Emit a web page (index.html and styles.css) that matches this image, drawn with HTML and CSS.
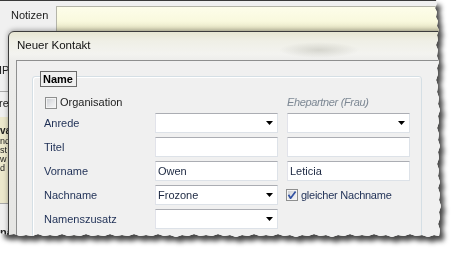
FILE: index.html
```html
<!DOCTYPE html>
<html>
<head>
<meta charset="utf-8">
<link rel="stylesheet" href="styles.css">
</head>
<body>
<div class="paper">
  <div class="sheet">
    <div class="bgwin">
      <div class="notes">
        <span class="notes-label">Notizen</span>
        <div class="notes-area"></div>
      </div>
      <div class="strip">
        <div class="s-ip">IP</div>
        <div class="s-line1"></div>
        <div class="s-re">re</div>
        <div class="s-panel">
          <div class="s-b">va</div>
          <div>nd</div>
          <div>st</div>
          <div>w</div>
          <div>d H</div>
        </div>
        <div class="s-line2"></div>
        <div class="s-na">nä</div>
      </div>
    </div>

    <div class="dialog">
      <div class="titlebar">Neuer Kontakt</div>
      <div class="client">
        <div class="group">
          <div class="legend">Name</div>
          <div class="form">
            <div class="check span2">
              <span class="cb"></span>
              <span class="cb-label dark">Organisation</span>
            </div>
            <div class="partner">Ehepartner (Frau)</div>

            <div class="label">Anrede</div>
            <div class="field combo"><span class="val"></span><svg class="arrow" width="7" height="4" viewBox="0 0 7 4"><polygon points="0,0 7,0 3.5,4" fill="#000"/></svg></div>
            <div class="field combo"><span class="val"></span><svg class="arrow" width="7" height="4" viewBox="0 0 7 4"><polygon points="0,0 7,0 3.5,4" fill="#000"/></svg></div>

            <div class="label">Titel</div>
            <div class="field"><span class="val"></span></div>
            <div class="field"><span class="val"></span></div>

            <div class="label">Vorname</div>
            <div class="field"><span class="val">Owen</span></div>
            <div class="field"><span class="val">Leticia</span></div>

            <div class="label">Nachname</div>
            <div class="field combo"><span class="val">Frozone</span><svg class="arrow" width="7" height="4" viewBox="0 0 7 4"><polygon points="0,0 7,0 3.5,4" fill="#000"/></svg></div>
            <div class="check">
              <span class="cb checked"><svg width="10" height="10" viewBox="0 0 10 10"><path d="M1.5 4.8 L3.6 8.2 L8.6 1.4" fill="none" stroke="#3453a3" stroke-width="1.7" stroke-linejoin="round"/></svg></span>
              <span class="cb-label">gleicher Nachname</span>
            </div>

            <div class="label">Namenszusatz</div>
            <div class="field combo"><span class="val"></span><svg class="arrow" width="7" height="4" viewBox="0 0 7 4"><polygon points="0,0 7,0 3.5,4" fill="#000"/></svg></div>
            <div></div>
          </div>
        </div>
      </div>
    </div>
  </div>
</div>
</body>
</html>
```

FILE: styles.css
```css
html, body {
  margin: 0;
  padding: 0;
  background: #ffffff;
}

.paper {
  width: 457px;
  height: 257px;
  filter: drop-shadow(4px 5px 2.5px rgba(0, 0, 0, 0.72));
}

.sheet {
  position: relative;
  width: 457px;
  height: 257px;
  overflow: hidden;
  background: #f0f0f0;
  box-shadow: inset 0 1px 0 #3a3a3a;
  font-family: "Liberation Sans", Arial, sans-serif;
  font-size: 11px;
  color: #1e2f55;
  clip-path: polygon(0 0, 436px 0, 437px 4px, 435px 8px, 437px 12px, 436px 17px, 438px 21px, 437px 26px, 439px 30px, 437px 35px, 438px 40px, 436px 45px, 438px 50px, 437px 56px, 439px 62px, 437px 68px, 438px 74px, 436px 80px, 438px 86px, 437px 92px, 439px 98px, 438px 104px, 440px 110px, 438px 116px, 439px 122px, 437px 128px, 439px 134px, 438px 140px, 440px 146px, 438px 152px, 439px 158px, 437px 164px, 439px 170px, 438px 176px, 440px 182px, 438px 188px, 440px 194px, 439px 200px, 441px 206px, 439px 212px, 440px 218px, 438px 224px, 440px 230px, 439px 236px, 434px 235px, 428px 237px, 422px 235px, 416px 236px, 410px 234px, 404px 236px, 398px 235px, 392px 237px, 386px 235px, 380px 236px, 374px 234px, 368px 236px, 362px 235px, 356px 236px, 350px 234px, 344px 236px, 338px 235px, 332px 237px, 326px 235px, 320px 236px, 314px 234px, 308px 236px, 302px 235px, 296px 237px, 290px 235px, 284px 236px, 278px 234px, 272px 236px, 266px 235px, 260px 236px, 254px 234px, 248px 236px, 242px 235px, 236px 237px, 230px 235px, 224px 236px, 218px 234px, 212px 236px, 206px 235px, 200px 236px, 194px 234px, 188px 236px, 182px 235px, 176px 237px, 170px 235px, 164px 236px, 158px 234px, 152px 236px, 146px 235px, 140px 236px, 134px 234px, 128px 236px, 122px 235px, 116px 236px, 110px 234px, 104px 236px, 98px 235px, 92px 236px, 86px 234px, 80px 236px, 74px 235px, 68px 236px, 62px 234px, 56px 236px, 50px 235px, 44px 236px, 38px 234px, 32px 236px, 26px 235px, 20px 236px, 14px 234px, 8px 235px, 0 233px);
}

/* ---------- background window ---------- */
.bgwin {
  display: flex;
  flex-direction: column;
}

.notes {
  display: flex;
  align-items: flex-start;
  height: 40px;
  padding: 6px 0 0 11px;
  box-sizing: border-box;
  overflow: hidden;
}

.notes-label {
  width: 45px;
  line-height: 14px;
  margin-top: 2px;
  color: #1a1a1a;
}

.notes-area {
  flex: 1;
  height: 40px;
  border: 1px solid #b4b4a8;
  background: linear-gradient(to bottom, #fdfdea 0, #f9f9de 14px, #e8e6c6 22px, #cfcdb0 32px);
}

.strip {
  width: 8px;
  white-space: nowrap;
  overflow: hidden;
  color: #222;
  font-size: 11px;
}

.s-ip {
  margin-top: 23px;
  line-height: 14px;
  margin-left: -1px;
}

.s-line1 {
  margin-top: 14px;
  height: 1px;
  background: #a8a8a8;
}

.s-re {
  margin-top: 4px;
  line-height: 14px;
  margin-left: -1px;
}

.s-panel {
  margin-top: 7px;
  height: 86px;
  padding-top: 8px;
  box-sizing: border-box;
  background: #ece8cc;
  font-size: 9px;
  line-height: 9px;
}

.s-b {
  font-weight: bold;
  font-size: 10px;
  line-height: 11px;
  margin-bottom: 1px;
}

.s-line2 {
  height: 1px;
  background: #a8a8a8;
}

.s-na {
  margin-top: 21px;
  line-height: 14px;
  font-weight: bold;
}

/* ---------- dialog ---------- */
.dialog {
  position: absolute;
  left: 8px;
  top: 31px;
  width: 470px;
  height: 240px;
  box-sizing: border-box;
  border: 1px solid #3c3c3c;
  border-radius: 6px 6px 0 0;
  padding-left: 7px;
  background:
    radial-gradient(ellipse 40px 8px at 310px 18px, rgba(190, 190, 180, 0.55), rgba(190, 190, 180, 0)),
    linear-gradient(to bottom, #e7e6d2 0, #efefe6 9px, #f3f3f0 22px, #ededeb 28px, #e4e4e2 100%);
  box-shadow: 0 -1px 5px rgba(0, 0, 0, 0.35);
}

.titlebar {
  height: 28px;
  line-height: 27px;
  padding-left: 1px;
  color: #111;
  font-size: 11.5px;
}

.client {
  height: 220px;
  border-left: 1px solid #8e8f8f;
  border-top: 1px solid #8e8f8f;
  background: #f0f0f0;
  padding: 15px 0 0 15px;
  box-sizing: border-box;
}

.group {
  width: 390px;
  height: 200px;
  box-sizing: border-box;
  border: 1px solid #d5dfe5;
  border-radius: 3px;
  padding-left: 11px;
  box-shadow: inset 1px 1px 0 #ffffff;
}

.legend {
  width: fit-content;
  margin: -6px 0 0 -4px;
  padding: 0 3px 0 2px;
  border: 1px solid #6a6a6a;
  background: #f0f0f0;
  font-weight: bold;
  line-height: 14px;
  color: #000;
}

.form {
  margin-top: 9px;
  display: grid;
  grid-template-columns: 102px 123px 123px;
  grid-template-rows: 13px repeat(5, 20px);
  column-gap: 9px;
  row-gap: 4px;
}

.span2 {
  grid-column: span 2;
}

.check {
  display: flex;
  align-items: center;
  gap: 3px;
}

.cb {
  width: 12px;
  height: 12px;
  margin-left: 1px;
  box-sizing: border-box;
  border: 1px solid #8e8f8f;
  background: linear-gradient(135deg, #c9ccd1 0, #e6e7e9 55%, #f7f7f7 100%);
  box-shadow: inset 0 0 0 1px #f4f4f4;
  display: flex;
  align-items: center;
  justify-content: center;
}

.cb.checked {
  margin-left: -1px;
}

.cb-label {
  line-height: 13px;
  color: #1e2f55;
  letter-spacing: -0.25px;
}

.cb-label.dark {
  color: #1c1c1c;
  letter-spacing: 0;
}

.partner {
  font-style: italic;
  color: #7d8894;
  line-height: 13px;
  letter-spacing: -0.35px;
}

.label {
  display: flex;
  align-items: center;
  color: #1e2f55;
}

.field {
  display: flex;
  align-items: center;
  box-sizing: border-box;
  background: #ffffff;
  border: 1px solid #dde2e8;
  border-top-color: #abadb3;
  border-left-color: #e2e3ea;
  padding-left: 2px;
}

.val {
  color: #1b2740;
}

.arrow {
  margin-left: auto;
  margin-right: 4px;
}
```
